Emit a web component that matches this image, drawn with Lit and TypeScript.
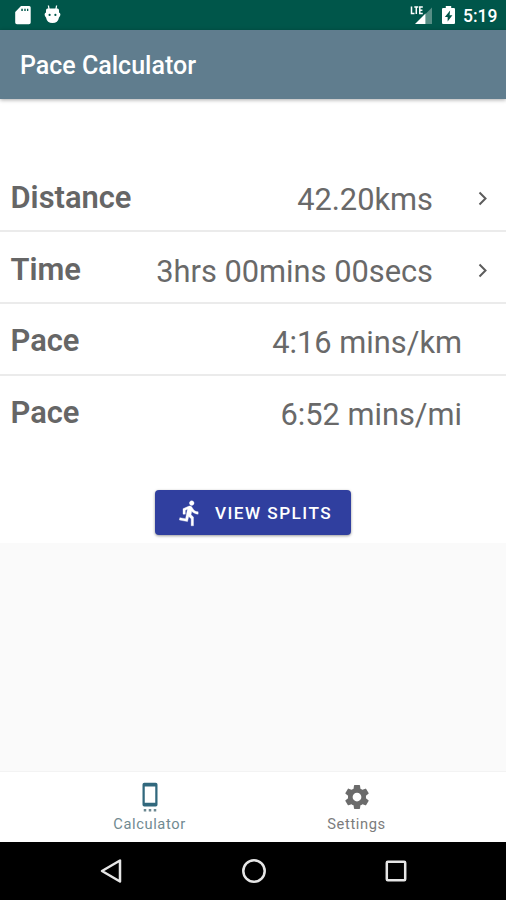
import { LitElement, html, css, nothing } from "lit";
import { customElement } from "lit/decorators.js";

@customElement("status-bar")
class StatusBar extends LitElement {
  static styles = css`
    :host { display: flex; align-items: center; height: 30px; box-sizing: border-box; background: #00564a; color: #fff; padding: 0 9px 0 14px; }
    .sd { width: 17px; height: 20px; margin-right: 13px; }
    .bot { width: 17px; height: 20px; }
    .grow { flex: 1; }
    .signal { width: 24px; height: 20px; }
    .battery { width: 13px; height: 20px; margin: 0 8px 0 8px; }
    .time { font: 500 17.500px/30px Roboto, sans-serif; padding-top: 1px; width: 34px; white-space: nowrap; }
  `;
  render() {
    return html`
      <svg class="sd" viewBox="0 0 17 20"><path fill="#fff" fill-rule="evenodd" d="M7 1h8.200a1.500 1.500 0 0 1 1.500 1.500v15a1.800 1.800 0 0 1-1.800 1.800H3a1.800 1.800 0 0 1-1.800-1.800V7zM7.300 3.700v2.200h1.500V3.700zm3 0v2.200h1.400V3.700zm2.700 0v2.200h1.300V3.700z"/></svg>
      <svg class="bot" viewBox="0 0 16 20"><path d="M4.500 4 3.900 .5M11.500 4l.6-3.500" stroke="#fff" stroke-width="1.300"/><path fill="#fff" fill-rule="evenodd" d="M3 3.500h10q1.500 0 1.500 2v2q1.400.3 1.400 2t-1.400 3Q13.500 18 8 18T1.500 12.500Q.1 11.200.1 9.500t1.400-2v-2q0-2 1.500-2M4 9.900a1.100 1.100 0 1 0 2.200 0 1.100 1.100 0 0 0-2.200 0m5.800 0a1.100 1.100 0 1 0 2.200 0 1.100 1.100 0 0 0-2.200 0"/></svg>
      <span class="grow"></span>
      <svg class="signal" viewBox="0 0 24 20"><path fill="#568e85" d="M15.500 19V9L22 2.500V19z"/><path fill="#fff" d="M5 19 15.500 8.500V19z"/><path d="M1.500 1.500v7h3M4.300 2h4M6.300 2v7M12.800 2H9.800v6.500h3M9.800 5.200h2.600" fill="none" stroke="#fff" stroke-width="1.500"/></svg>
      <svg class="battery" viewBox="0 0 12 20" preserveAspectRatio="none"><path fill="#fff" fill-rule="evenodd" d="M3.500 1h5v2H11q1 0 1 1v14q0 1-1 1H1q-1 0-1-1V4q0-1 1-1h2.500zM7.500 5.500 2.600 12h2.600v4.500l4.400-6.300H7z"/></svg>
      <span class="time">5:19</span>`;
  }
}

@customElement("value-row")
class ValueRow extends LitElement {
  static properties = { label: {}, value: {}, link: { type: Boolean } };
  declare label: string;
  declare value: string;
  declare link: boolean;
  static styles = css`
    :host { display: flex; align-items: center; box-sizing: border-box; height: 71.700px; padding: 3px 16px 0 10.500px; font-family: Roboto, sans-serif; font-size: 30.800px; line-height: 36px; color: #696969; white-space: nowrap; }
    :host(:not(:last-of-type)) { border-bottom: 2px solid #ebebeb; padding-top: 5px; }
    .label { font-weight: 600; flex: 1; font-size: 30.900px; color: #666; }
    .value { padding-top: 4px; margin-right: 28px; font-weight: 400; }
    .linked { margin-right: 43px; }
    .chevron { width: 14px; height: 18px; }
  `;
  render() {
    return html`<span class="label">${this.label}</span>
      <span class="value ${this.link ? "linked" : ""}">${this.value}</span>
      ${this.link
        ? html`<svg class="chevron" viewBox="0 0 14 18"><path d="m3.500 3.500 6 6-6 6" fill="none" stroke="#5c5c5c" stroke-width="2"/></svg>`
        : nothing}`;
  }
}

@customElement("app-root")
class AppRoot extends LitElement {
  static styles = css`
    :host { display: flex; flex-direction: column; height: 900px; width: 506px; background: #fafafa; font-family: Roboto, sans-serif; overflow: hidden; }
    .header { height: 69px; flex: none; background: #607d8e; color: #fff; box-sizing: border-box; padding: 1px 20px 0; font-weight: 500; font-size: 25px; line-height: 70px; box-shadow: 0 1px 4px #0005; z-index: 1; }
    .panel { background: #fff; flex: none; height: 444px; box-sizing: border-box; padding-top: 61.500px; display: flex; flex-direction: column; }
    .button { align-self: center; margin-top: 42.500px; width: 196px; height: 45px; border: 0; border-radius: 4px; background: #303f9f; color: #fff; display: flex; align-items: center; padding: 1px 0 0 21px; box-sizing: border-box; font: 500 17.200px Roboto, sans-serif; letter-spacing: 1.450px; white-space: nowrap; box-shadow: 0 1px 3px #0006; }
    .run { width: 28px; height: 28px; margin-right: 11px; flex: none; }
    .grow { flex: 1; }
    .tabs { height: 71px; flex: none; box-sizing: border-box; padding: 0 46px; background: #fff; border-top: 1px solid #f3f3f3; display: flex; font-size: 14.700px; letter-spacing: .6px; color: #7c7c7c; }
    .tab { flex: 1; display: flex; flex-direction: column; align-items: center; padding-top: 10px; }
    .tab svg { width: 30px; height: 30px; }
    .tab span { line-height: 18px; margin-top: 3px; }
    .active { color: #718a91; }
    .nav { height: 58px; flex: none; background: #000; display: flex; justify-content: space-between; align-items: center; padding: 0 96px 0 97px; }
    .nav svg { width: 28px; height: 28px; }
  `;
  render() {
    return html`
      <status-bar></status-bar>
      <div class="header">Pace Calculator</div>
      <div class="panel">
        <div>
          <value-row label="Distance" value="42.20kms" link></value-row>
          <value-row label="Time" value="3hrs 00mins 00secs" link></value-row>
          <value-row label="Pace" value="4:16 mins/km"></value-row>
          <value-row label="Pace" value="6:52 mins/mi"></value-row>
        </div>
        <button class="button">
          <svg class="run" viewBox="0 0 24 24"><path fill="currentColor" stroke="currentColor" stroke-width=".3" d="M13.490 5.480c1.100 0 2-.9 2-2s-.9-2-2-2-2 .9-2 2 .9 2 2 2zm-3.600 13.900 1-4.400 2.100 2v6h2v-7.500l-2.100-2 .6-3c1.300 1.500 3.300 2.500 5.500 2.500v-2c-1.900 0-3.500-1-4.300-2.400l-1-1.600c-.4-.6-1-1-1.700-1-.3 0-.5.1-.8.1l-5.200 2.200v4.700h2v-3.400l1.800-.7-1.600 8.100-4.900-1-.4 2 7 1.400z"/></svg>
          VIEW SPLITS
        </button>
      </div>
      <div class="grow"></div>
      <div class="tabs">
        <div class="tab active">
          <svg viewBox="0 0 24 24"><path fill="#31687d" fill-rule="evenodd" d="M7.400 .5h9.200Q18 .5 18 1.900v16.200q0 1.400-1.400 1.400H7.400Q6 19.500 6 18.100V1.900Q6 .5 7.400 .5M7.800 3.500v13h8.400v-13z"/><path fill="#6d8992" d="M7 21.500h2v2H7zm4 0h2v2h-2zm4 0h2v2h-2z"/></svg>
          <span>Calculator</span>
        </div>
        <div class="tab">
          <svg viewBox="0 0 24 24"><path fill="#6b6b6b" d="M19.140 12.940c.04-.3.060-.61.060-.94 0-.32-.02-.64-.07-.94l2.030-1.580a.49.49 0 0 0 .12-.61l-1.920-3.320a.488.488 0 0 0-.59-.22l-2.390.96c-.5-.38-1.030-.7-1.620-.94l-.36-2.540a.484.484 0 0 0-.48-.41h-3.840c-.24 0-.43.17-.47.41l-.36 2.540c-.59.24-1.130.57-1.620.94l-2.390-.96c-.22-.08-.47 0-.59.22L2.740 8.870c-.12.21-.08.47.12.61l2.030 1.580c-.05.3-.09.63-.09.94s.02.64.07.94l-2.030 1.580a.49.49 0 0 0-.12.61l1.920 3.320c.12.22.37.29.59.22l2.390-.96c.5.38 1.030.7 1.620.94l.36 2.540c.05.24.24.41.48.41h3.840c.24 0 .44-.17.47-.41l.36-2.540c.59-.24 1.130-.56 1.620-.94l2.390.96c.22.08.47 0 .59-.22l1.920-3.320c.12-.22.07-.47-.12-.61l-2.010-1.580zM12 15.500a3.500 3.500 0 1 1 0-7 3.500 3.500 0 0 1 0 7z"/></svg>
          <span>Settings</span>
        </div>
      </div>
      <div class="nav">
        <svg viewBox="0 0 28 28"><path d="M23 3.500v21L5 14z" fill="none" stroke="#e6e6e6" stroke-width="2.500" stroke-linejoin="round"/></svg>
        <svg viewBox="0 0 28 28"><circle cx="14" cy="14" r="10.700" fill="none" stroke="#e6e6e6" stroke-width="2.500"/></svg>
        <svg viewBox="0 0 28 28"><rect x="4.800" y="4.800" width="18.400" height="18.400" rx="1" fill="none" stroke="#e6e6e6" stroke-width="2.500"/></svg>
      </div>`;
  }
}
